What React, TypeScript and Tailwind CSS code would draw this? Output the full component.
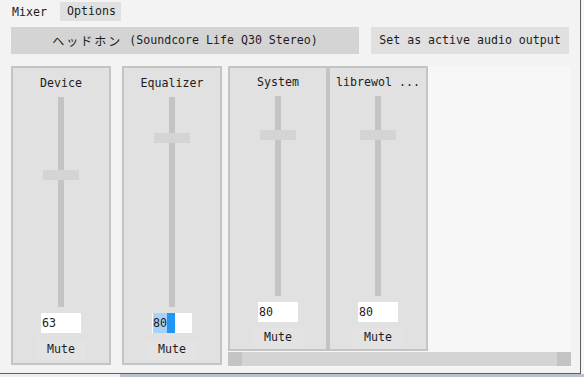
import React from "react";

const mono = { fontFamily: '"DejaVu Sans Mono", "Noto Sans CJK JP", monospace' };

function Track({ height, handleTop }: { height: number; handleTop: number }) {
  return (
    <div className="relative flex justify-center w-[36px]" style={{ height }}>
      <div className="w-[6px] h-full bg-[#c4c4c4]" />
      <div className="absolute left-0 w-[36px] h-[10px] bg-[#d4d4d4]" style={{ top: handleTop }} />
    </div>
  );
}

function Group({
  title,
  value,
  trackH,
  handleTop,
  big,
  selected,
}: {
  title: string;
  value: string;
  trackH: number;
  handleTop: number;
  big?: boolean;
  selected?: boolean;
}) {
  return (
    <div
      className={
        "w-[100px] border-2 border-[#c4c4c4] bg-[#e1e1e1] flex flex-col items-center " +
        (big ? "h-[299px] pt-[8px]" : "h-[285px] pt-[7px]")
      }
    >
      <div className="h-[14px] leading-[14px] text-[11.6px] text-[#1c1c1c] whitespace-nowrap">{title}</div>
      <div className="mt-[7px]">
        <Track height={trackH} handleTop={handleTop} />
      </div>
      <div className="mt-[6px] w-[40px] h-[20px] bg-white flex items-center text-[11.6px] text-[#1c1c1c] pl-[1px]">
        {selected ? (
          <>
            <span className="h-[20px] leading-[20px] bg-[#a9d1fb] pr-[0px] w-[14px]">{value}</span>
            <span className="h-[20px] w-[8px] bg-[#2196f3]" />
          </>
        ) : (
          <span className="leading-[20px]">{value}</span>
        )}
      </div>
      <div
        className={
          "flex items-center justify-center w-[50px] h-[20px] bg-[#e3e3e3] text-[11.6px] text-[#1c1c1c] " +
          (big ? "mt-[7px] h-[18px]" : "mt-[6px]")
        }
      >
        Mute
      </div>
    </div>
  );
}

export default function App() {
  return (
    <div className="w-[584px] h-[377px] flex flex-col bg-[#f4f4f4] overflow-hidden" style={mono}>
      <div className="flex h-[374px]">
        <div className="w-[581px] h-[374px] bg-[#f3f3f3] border-r border-b border-[#5e5e5e] flex flex-col">
          {/* tabs */}
          <div className="h-[21px] flex text-[11.6px] text-[#1c1c1c]">
            <div className="w-[60px] pl-[12px] pt-[5px] leading-[14px]">Mixer</div>
            <div className="mt-[2px] w-[61px] h-[19px] bg-[#e0e0e0] pl-[7px] pt-[2px] leading-[14px]">Options</div>
          </div>
          {/* buttons */}
          <div className="flex mt-[6px] ml-[11px] gap-[12px] text-[11.6px] text-[#1c1c1c]">
            <div className="w-[348px] h-[27px] bg-[#d4d4d4] flex items-center justify-center whitespace-nowrap">
              <span className="tracking-[2px] text-[12px]" style={{ fontFamily: '"Noto Sans CJK JP", sans-serif' }}>
                ヘッドホン
              </span>
              <span>&nbsp;(Soundcore Life Q30 Stereo)</span>
            </div>
            <div className="w-[198px] h-[27px] bg-[#e0e0e0] flex items-center justify-center whitespace-nowrap">
              Set as active audio output
            </div>
          </div>
          {/* mixer */}
          <div className="flex mt-[12px] ml-[11px]">
            <Group title="Device" value="63" trackH={210} handleTop={73} big />
            <div className="ml-[11px]">
              <Group title="Equalizer" value="80" trackH={210} handleTop={36} big selected />
            </div>
            <div className="ml-[6px] w-[343px] h-[301px] bg-[#f7f7f7] flex flex-col">
              <div className="flex h-[286px]">
                <Group title="System" value="80" trackH={200} handleTop={34} />
                <Group title="librewol ..." value="80" trackH={200} handleTop={34} />
              </div>
              <div className="h-[14px] flex bg-[#d4d4d4]">
                <div className="w-[14px] h-full bg-[#c4c4c4]" />
                <div className="flex-1" />
                <div className="w-[14px] h-full bg-[#c4c4c4]" />
              </div>
            </div>
          </div>
        </div>
        <div className="flex-1 bg-[#f6f6f6]" />
      </div>
      <div className="flex h-[3px]">
        <div className="w-[120px] bg-[#eeeeee]" />
        <div className="flex-1 bg-[#bcc1cb]" />
      </div>
    </div>
  );
}
